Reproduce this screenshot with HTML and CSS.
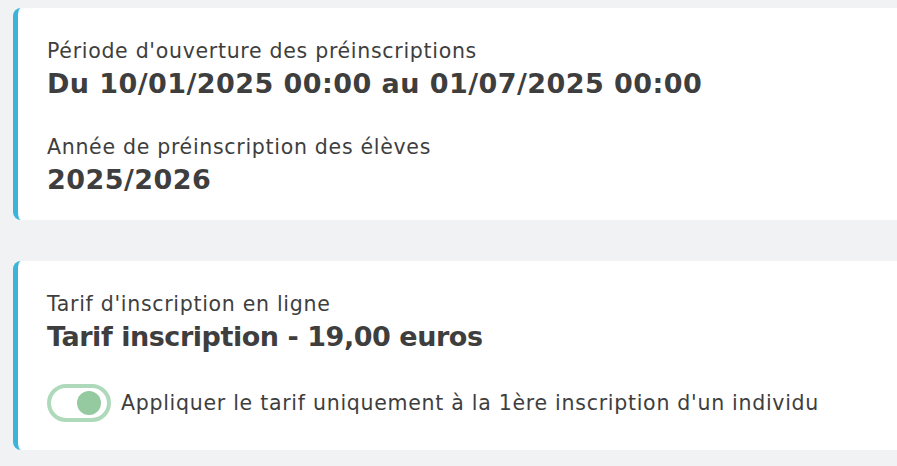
FILE: index.html
```html
<!DOCTYPE html>
<html lang="fr">
<head>
    <meta charset="UTF-8">
    <meta name="viewport" content="width=device-width, initial-scale=1.0">
    <title>Préinscriptions</title>
    <link rel="stylesheet" href="styles.css">
</head>
<body>
    <div class="page">
        <section class="card">
            <div class="field">
                <div class="field-label">Période d'ouverture des préinscriptions</div>
                <div class="field-value">Du 10/01/2025 00:00 au 01/07/2025 00:00</div>
            </div>
            <div class="field">
                <div class="field-label">Année de préinscription des élèves</div>
                <div class="field-value">2025/2026</div>
            </div>
        </section>

        <section class="card card-tarif">
            <div class="field">
                <div class="field-label">Tarif d'inscription en ligne</div>
                <div class="field-value field-value-text">Tarif inscription - 19,00 euros</div>
            </div>
            <label class="toggle-row">
                <span class="toggle"><span class="toggle-knob"></span></span>
                <span class="toggle-text">Appliquer le tarif uniquement à la 1ère inscription d'un individu</span>
            </label>
        </section>
    </div>
</body>
</html>
```

FILE: styles.css
```css
body {
    margin: 0;
    padding: 0;
    background-color: #f1f2f4;
    font-family: "DejaVu Sans", Verdana, sans-serif;
    color: #3e3e3e;
    overflow: hidden;
}

.page {
    padding: 8px 0 0 13px;
    display: flex;
    flex-direction: column;
    gap: 41px;
}

.card {
    width: 920px;
    background-color: #fff;
    border-left: 5px solid #3cb4d9;
    border-radius: 8px;
    padding: 28px 0 22px 29px;
    box-sizing: border-box;
    display: flex;
    flex-direction: column;
    gap: 30px;
}

.card-tarif {
    padding-bottom: 28px;
    gap: 29px;
}

.field-label {
    font-size: 20.5px;
    line-height: 30px;
    letter-spacing: 0.7px;
}

.field-value {
    font-size: 27px;
    font-weight: bold;
    line-height: 36px;
    letter-spacing: 0.44px;
}

.field-value-text {
    letter-spacing: -0.45px;
}

.toggle-row {
    display: flex;
    align-items: center;
    gap: 10px;
}

.toggle {
    width: 64px;
    height: 38px;
    box-sizing: border-box;
    border: 4px solid #aedabb;
    border-radius: 19px;
    display: flex;
    align-items: center;
    justify-content: flex-end;
    padding-right: 6px;
}

.toggle-knob {
    width: 24px;
    height: 24px;
    border-radius: 50%;
    background-color: #95c9a0;
}

.toggle-text {
    font-size: 20.5px;
    letter-spacing: 0.72px;
}
```
